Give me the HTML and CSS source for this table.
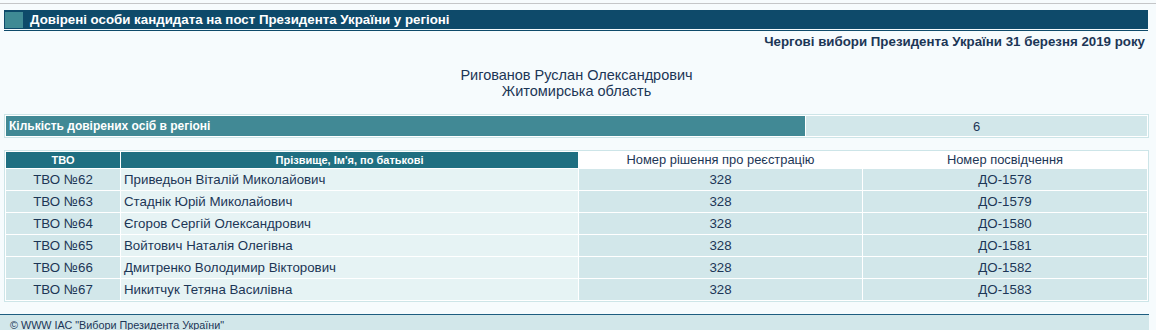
FILE: index.html
```html
<!DOCTYPE html>
<html lang="uk">
<head>
<meta charset="utf-8">
<title>Довірені особи кандидата</title>
<link rel="stylesheet" href="styles.css">
</head>
<body>
<div class="topline"></div>
<div class="page">
  <div class="titlebar">
    <div class="titlebar-square"></div>
    <div class="titlebar-text">Довірені особи кандидата на пост Президента України у регіоні</div>
  </div>
  <div class="titlebar-line"></div>
  <div class="subtitle">Чергові вибори Президента України 31 березня 2019 року</div>
  <div class="candidate">
    <div>Ригованов Руслан Олександрович</div>
    <div>Житомирська область</div>
  </div>
  <table class="count-table">
    <tr>
      <td class="count-label">Кількість довірених осіб в регіоні</td>
      <td class="count-value">6</td>
    </tr>
  </table>
  <table class="data-table">
    <thead>
      <tr>
        <th class="h-dark c1">ТВО</th>
        <th class="h-dark c2">Прізвище, Ім'я, по батькові</th>
        <th class="h-light c3">Номер рішення про реєстрацію</th>
        <th class="h-light c4">Номер посвідчення</th>
      </tr>
    </thead>
    <tbody>
      <tr><td class="d-center">ТВО №62</td><td class="d-name">Приведьон Віталій Миколайович</td><td class="d-center">328</td><td class="d-center">ДО-1578</td></tr>
      <tr><td class="d-center">ТВО №63</td><td class="d-name">Стаднік Юрій Миколайович</td><td class="d-center">328</td><td class="d-center">ДО-1579</td></tr>
      <tr><td class="d-center">ТВО №64</td><td class="d-name">Єгоров Сергій Олександрович</td><td class="d-center">328</td><td class="d-center">ДО-1580</td></tr>
      <tr><td class="d-center">ТВО №65</td><td class="d-name">Войтович Наталія Олегівна</td><td class="d-center">328</td><td class="d-center">ДО-1581</td></tr>
      <tr><td class="d-center">ТВО №66</td><td class="d-name">Дмитренко Володимир Вікторович</td><td class="d-center">328</td><td class="d-center">ДО-1582</td></tr>
      <tr><td class="d-center">ТВО №67</td><td class="d-name">Никитчук Тетяна Василівна</td><td class="d-center">328</td><td class="d-center">ДО-1583</td></tr>
    </tbody>
  </table>
</div>
<div class="footer">© WWW ІАС "Вибори Президента України"</div>
</body>
</html>
```
FILE: styles.css
```css
html, body {
  margin: 0;
  padding: 0;
}
body {
  background: #f6fbfd;
  font-family: "Liberation Sans", Arial, sans-serif;
  color: #1c3656;
  width: 1156px;
  height: 330px;
  overflow: hidden;
}
.topline {
  height: 1px;
  margin-top: 3px;
  background: #c4c6c8;
}
.page {
  width: 1145px;
  padding-left: 4px;
}
.titlebar {
  margin-top: 6px;
  width: 1143px;
  height: 16px;
  padding: 2px 0 1px 1px;
  background: #0e4a6a;
  display: flex;
  align-items: center;
}
.titlebar-square {
  width: 18px;
  height: 16px;
  background: #3f8a94;
  flex: none;
}
.titlebar-text {
  padding-left: 7px;
  color: #ffffff;
  font-weight: bold;
  font-size: 13.3px;
  line-height: 16px;
  white-space: nowrap;
}
.titlebar-line {
  margin-top: 1px;
  height: 1px;
  width: 1144px;
  background: #0e4a6a;
}
.subtitle {
  margin-top: 3px;
  text-align: right;
  padding-right: 4px;
  font-weight: bold;
  font-size: 13.3px;
  line-height: 15px;
}
.candidate {
  margin-top: 18px;
  text-align: center;
  font-size: 14.5px;
  line-height: 16px;
}
.count-table {
  margin-top: 15px;
  width: 1145px;
  border: 1px solid #cde5e8;
  border-spacing: 1px;
  background: #ffffff;
  table-layout: fixed;
}
.count-table td {
  height: 20px;
  padding: 0;
}
.count-table td.count-label {
  width: 796px;
  background: #418995;
  color: #ffffff;
  font-weight: bold;
  font-size: 12px;
  padding-left: 3px;
}
.count-value {
  background: #d2e7ea;
  text-align: center;
  font-size: 13px;
}
.data-table {
  margin-top: 12px;
  width: 1145px;
  border: 1px solid #cde5e8;
  border-spacing: 1px;
  background: #ffffff;
  table-layout: fixed;
}
.data-table th {
  height: 16px;
  padding: 0;
  font-size: 11px;
  line-height: 14px;
}
.c1 { width: 114px; }
.c2 { width: 457px; }
.c3 { width: 283px; }
.c4 { width: 284px; }
.h-dark {
  background: #1f6f81;
  color: #ffffff;
  font-weight: bold;
}
.data-table th.h-light {
  background: #ffffff;
  color: #1c3656;
  font-weight: normal;
  font-size: 12.9px;
}
.data-table td {
  height: 21px;
  padding: 0;
  font-size: 13.3px;
  background: #d2e7ea;
}
.d-center {
  text-align: center;
}
.data-table td.d-name {
  background: #e6f3f4;
  padding-left: 3px;
}
.footer {
  margin-top: 12px;
  width: 1149px;
  border-top: 1px solid #1d5d80;
  background: #d2e7ea;
  height: 20px;
  padding-left: 10px;
  box-sizing: border-box;
  font-size: 10.8px;
  line-height: 18px;
  padding-top: 1px;
}
```
